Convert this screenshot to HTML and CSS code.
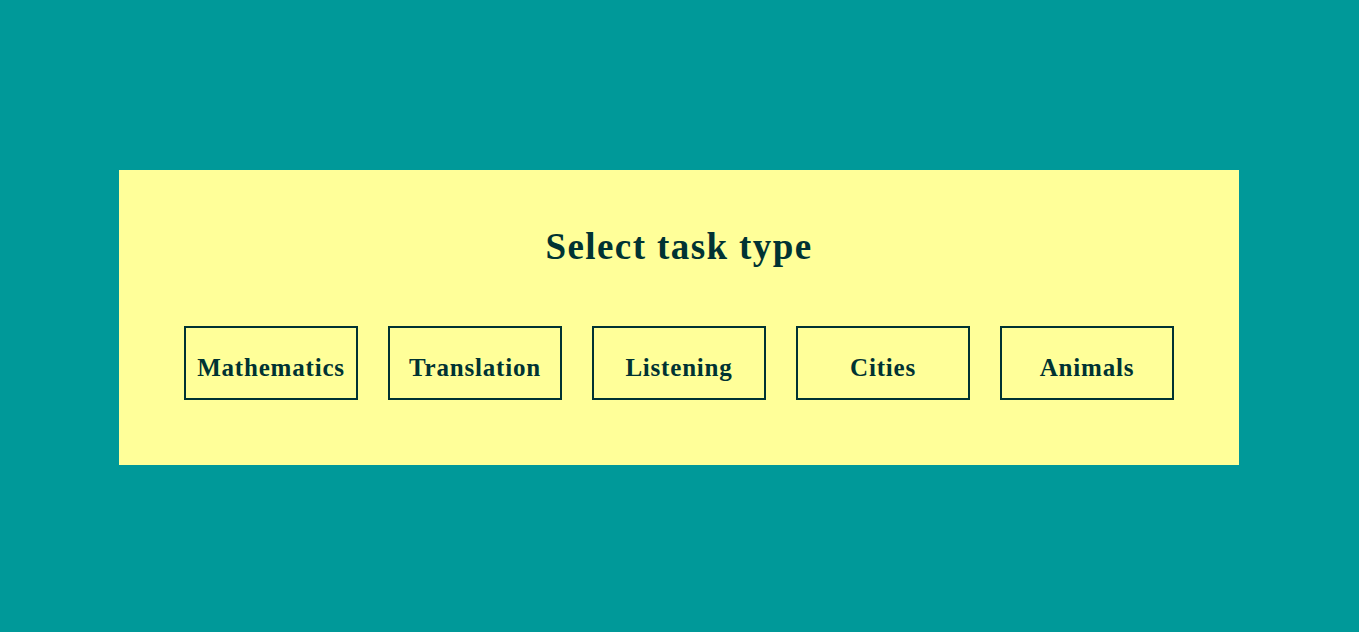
FILE: index.html
```html
<!DOCTYPE html>
<html lang="en">
<head>
<meta charset="utf-8">
<title>Select task type</title>
<link rel="stylesheet" href="styles.css">
</head>
<body>
<main class="page">
  <section class="card">
    <h1 class="title">Select task type</h1>
    <div class="options">
      <button class="option">Mathematics</button>
      <button class="option">Translation</button>
      <button class="option">Listening</button>
      <button class="option">Cities</button>
      <button class="option">Animals</button>
    </div>
  </section>
</main>
</body>
</html>
```

FILE: styles.css
```css
html, body {
  margin: 0;
  padding: 0;
  background: #009999;
}
.page {
  box-sizing: border-box;
  height: 632px;
  padding-top: 170px;
  display: flex;
  justify-content: center;
  align-items: flex-start;
  font-family: "Liberation Serif", "DejaVu Serif", serif;
  color: #003333;
}
.card {
  box-sizing: border-box;
  width: 1120px;
  height: 295px;
  margin-left: -1px;
  background: #ffff99;
  display: flex;
  flex-direction: column;
  align-items: center;
  padding-top: 52px;
}
.title {
  margin: 0;
  font-size: 37px;
  line-height: 50px;
  font-weight: bold;
  letter-spacing: 1.4px;
}
.options {
  margin-top: 54px;
  display: flex;
  gap: 30px;
}
.option {
  box-sizing: border-box;
  width: 174px;
  height: 74px;
  border: 2px solid #003333;
  background: transparent;
  color: #003333;
  font-family: "Liberation Serif", "DejaVu Serif", serif;
  font-size: 25px;
  font-weight: bold;
  letter-spacing: 0.8px;
  padding: 9px 0 0 0;
  display: flex;
  align-items: center;
  justify-content: center;
}
```
